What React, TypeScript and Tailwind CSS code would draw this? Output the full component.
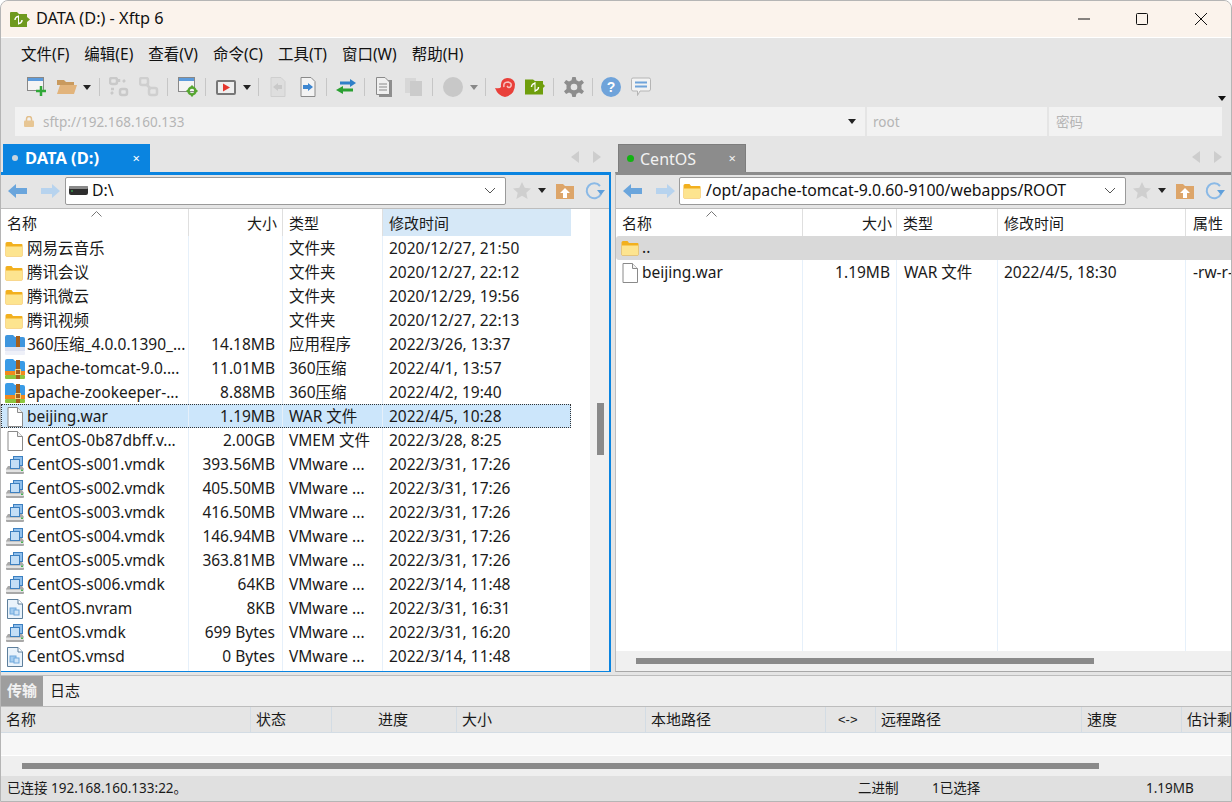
import type { ReactNode } from 'react'

const Folder = ({ className = '' }: { className?: string }) => (
  <svg width="18" height="16" viewBox="0 0 18 16" className={className}>
    <path d="M0.5 2.5Q0.5 1 2 1H6.5L8 3H16.5Q17.5 3 17.5 4V14.5Q17.5 15.5 16.5 15.5H1.5Q0.5 15.5 0.5 14.5Z" fill="#f2b01e" />
    <path d="M1 5.5H17V14.5Q17 15 16.5 15H1.5Q1 15 1 14.5Z" fill="#fde48f" />
  </svg>
)

const FileIcon = () => (
  <svg width="16" height="20" viewBox="0 0 16 20">
    <path d="M1 .5H10.5L15.5 5.5V19.5H1Z" fill="#fff" stroke="#8a8a8a" />
    <path d="M10.5 .5V5.5H15.5" fill="#f2f2f2" stroke="#8a8a8a" />
  </svg>
)

const ZipIcon = ({ faded }: { faded?: boolean }) => (
  <svg width="20" height="20" viewBox="0 0 20 20">
    <path d="M0 2Q0 0 2 0H8L10 2H18Q20 2 20 4V13H0Z" fill={faded ? '#3f96de' : '#3a9be6'} />
    <rect x="0" y="12" width="20" height="4" fill={faded ? '#dfe3f2' : '#f08a1d'} />
    <rect x="0" y="16" width="20" height="4" rx="1" fill={faded ? '#eef0f8' : '#8cc63f'} />
    <rect x="11" y="1" width="4" height={faded ? 11 : 19} fill="#a5601c" />
    {!faded && <rect x="10.500" y="10.500" width="5" height="5" fill="none" stroke="#f6d27c" />}
  </svg>
)

const DiskIcon = () => (
  <svg width="20" height="20" viewBox="0 0 20 20">
    <path d="M1 14L3 11H17L19 14V18Q19 19 18 19H2Q1 19 1 18Z" fill="#a8a8a8" />
    <path d="M1 14.500H19V17H1Z" fill="#e2e2e2" />
    <rect x="16" y="14.500" width="2" height="1.500" fill="#46b450" />
    <rect x="8.500" y="1.500" width="9" height="9" fill="#8fbfec" stroke="#3d80c0" />
    <rect x="5.500" y="4.500" width="9" height="9" fill="#c3def6" stroke="#3d80c0" />
  </svg>
)

const DocIcon = () => (
  <svg width="16" height="20" viewBox="0 0 16 20">
    <path d="M.5 .5H11L15.500 5V19.500H.5Z" fill="#eaf3fb" stroke="#5d7f9c" />
    <path d="M11 .5V5H15.500" fill="#fff" stroke="#5d7f9c" />
    <rect x="3" y="9" width="6" height="6" fill="#a5cdf0" stroke="#6fa8dc" />
    <rect x="7" y="11" width="5" height="5" fill="#cfe4f7" stroke="#6fa8dc" />
  </svg>
)

type Kind = 'folder' | 'file' | 'zip' | 'zipFaded' | 'disk' | 'doc'

const RowIcon = ({ kind }: { kind: Kind }) => {
  if (kind === 'folder') return <Folder />
  if (kind === 'file') return <span className="pl-[2px]"><FileIcon /></span>
  if (kind === 'zip') return <ZipIcon />
  if (kind === 'zipFaded') return <ZipIcon faded />
  if (kind === 'disk') return <DiskIcon />
  return <span className="pl-[2px]"><DocIcon /></span>
}

const leftRows: { kind: Kind; name: string; size: string; type: string; time: string; sel?: boolean }[] = [
  { kind: 'folder', name: '网易云音乐', size: '', type: '文件夹', time: '2020/12/27, 21:50' },
  { kind: 'folder', name: '腾讯会议', size: '', type: '文件夹', time: '2020/12/27, 22:12' },
  { kind: 'folder', name: '腾讯微云', size: '', type: '文件夹', time: '2020/12/29, 19:56' },
  { kind: 'folder', name: '腾讯视频', size: '', type: '文件夹', time: '2020/12/27, 22:13' },
  { kind: 'zipFaded', name: '360压缩_4.0.0.1390_...', size: '14.18MB', type: '应用程序', time: '2022/3/26, 13:37' },
  { kind: 'zip', name: 'apache-tomcat-9.0....', size: '11.01MB', type: '360压缩', time: '2022/4/1, 13:57' },
  { kind: 'zip', name: 'apache-zookeeper-...', size: '8.88MB', type: '360压缩', time: '2022/4/2, 19:40' },
  { kind: 'file', name: 'beijing.war', size: '1.19MB', type: 'WAR 文件', time: '2022/4/5, 10:28', sel: true },
  { kind: 'file', name: 'CentOS-0b87dbff.v...', size: '2.00GB', type: 'VMEM 文件', time: '2022/3/28, 8:25' },
  { kind: 'disk', name: 'CentOS-s001.vmdk', size: '393.56MB', type: 'VMware ...', time: '2022/3/31, 17:26' },
  { kind: 'disk', name: 'CentOS-s002.vmdk', size: '405.50MB', type: 'VMware ...', time: '2022/3/31, 17:26' },
  { kind: 'disk', name: 'CentOS-s003.vmdk', size: '416.50MB', type: 'VMware ...', time: '2022/3/31, 17:26' },
  { kind: 'disk', name: 'CentOS-s004.vmdk', size: '146.94MB', type: 'VMware ...', time: '2022/3/31, 17:26' },
  { kind: 'disk', name: 'CentOS-s005.vmdk', size: '363.81MB', type: 'VMware ...', time: '2022/3/31, 17:26' },
  { kind: 'disk', name: 'CentOS-s006.vmdk', size: '64KB', type: 'VMware ...', time: '2022/3/14, 11:48' },
  { kind: 'doc', name: 'CentOS.nvram', size: '8KB', type: 'VMware ...', time: '2022/3/31, 16:31' },
  { kind: 'disk', name: 'CentOS.vmdk', size: '699 Bytes', type: 'VMware ...', time: '2022/3/31, 16:20' },
  { kind: 'doc', name: 'CentOS.vmsd', size: '0 Bytes', type: 'VMware ...', time: '2022/3/14, 11:48' },
]

const Arrow = ({ right, light }: { right?: boolean; light?: boolean }) => (
  <svg width="20" height="16" viewBox="0 0 20 16" className={right ? 'scale-x-[-1]' : ''}>
    <path d="M0 8L8 1V5H19V11H8V15Z" fill={light ? '#b7d3ee' : '#6aa5dc'} />
  </svg>
)

const Caret = ({ color = '#222' }: { color?: string }) => (
  <svg width="8" height="5" viewBox="0 0 8 5"><path d="M0 0H8L4 5Z" fill={color} /></svg>
)

const Sep = ({ className }: { className: string }) => <div className={`h-[18px] w-px bg-[#c6c6c6] ${className}`} />

const Tool = ({ children, className }: { children: ReactNode; className: string }) => (
  <div className={`flex h-5 w-5 shrink-0 items-center justify-center ${className}`}>{children}</div>
)

const PathBar = ({ icon, path, width, lead }: { icon: ReactNode; path: string; width: string; lead: string }) => (
  <div className="flex h-[34px] shrink-0 items-center border-b border-[#bdbdbd] bg-[#e5e5e5] pb-[2px]">
    <div className={`flex shrink-0 items-center gap-[12px] pl-[7px] ${lead}`}>
      <Arrow />
      <Arrow right light />
    </div>
    <div className={`flex h-[28px] shrink-0 items-center rounded-[2px] border border-[#9a9a9a] bg-white pl-[3px] pr-[9px] ${width}`}>
      <span className="flex w-[23px] shrink-0 justify-start">{icon}</span>
      <span className="flex-1 text-[15.800px] text-[#111]">{path}</span>
      <svg width="12" height="7" viewBox="0 0 12 7"><path d="M1 1L6 6L11 1" fill="none" stroke="#555" /></svg>
    </div>
    <div className="flex items-center pl-[7px]">
      <svg width="18" height="17" viewBox="0 0 18 17"><path d="M9 0L11.700 5.800L18 6.500L13.300 10.700L14.600 17L9 13.800L3.400 17L4.700 10.700L0 6.500L6.300 5.800Z" fill="#cfcfcf" /></svg>
      <span className="ml-[7px] mr-[10px]"><Caret /></span>
      <svg width="18" height="16" viewBox="0 0 18 16">
        <path d="M0 1H7L9 3H18V16H0Z" fill="#dda569" />
        <path d="M9 5L14 10H11V15H7V10H4Z" fill="#fff" />
      </svg>
      <svg width="22" height="20" viewBox="0 0 22 20" className="ml-[10px]">
        <path d="M17 13A7.500 7.500 0 1 1 16 5" fill="none" stroke="#8ab9e6" strokeWidth="2" />
        <path d="M13 9H21L17 14Z" fill="#5f9fdb" />
      </svg>
    </div>
  </div>
)

const HeadCell = ({ children, className = '' }: { children?: ReactNode; className?: string }) => (
  <div className={`flex h-full shrink-0 items-center border-r border-[#dfdfdf] pt-[2px] ${className}`}>{children}</div>
)

const SortMark = () => (
  <svg width="11" height="6" viewBox="0 0 11 6" className="absolute top-[2px] left-[90px]">
    <path d="M.5 5.500L5.500 .5L10.500 5.500" fill="none" stroke="#777" />
  </svg>
)

const Cell = ({ children, className = '' }: { children?: ReactNode; className?: string }) => (
  <div className={`flex h-full shrink-0 items-center overflow-hidden whitespace-nowrap border-r border-[#e6f0fa] pt-[2px] ${className}`}>{children}</div>
)

const TabArrows = () => (
  <div className="flex items-center gap-[12px]">
    <svg width="9" height="12" viewBox="0 0 9 12"><path d="M8 0V12L0 6Z" fill="#cdcdcd" /></svg>
    <svg width="9" height="12" viewBox="0 0 9 12"><path d="M1 0V12L9 6Z" fill="#cdcdcd" /></svg>
  </div>
)

const TransferCol = ({ w, children, right }: { w: string; children: ReactNode; right?: boolean }) => (
  <div className={`flex h-full shrink-0 items-center border-r border-[#d3dce4] px-[5px] ${w} ${right ? 'justify-end' : ''}`}>{children}</div>
)

export default function App() {
  return (
    <div className="flex h-[802px] w-[1232px] flex-col overflow-hidden rounded-t-[8px] border border-[#b5b5b5] bg-[#e5e5e5] text-[15.500px] leading-none text-[#1a1a1a] [font-family:'Noto_Sans','Noto_Sans_CJK_SC',sans-serif]">
      {/* title */}
      <div className="flex h-[37px] shrink-0 items-center border-b border-white bg-[#fbf3ec] pl-[9px]">
        <svg width="20" height="15" viewBox="0 0 20 15">
          <path d="M0 1Q0 0 1 0H7L9 2H17V5L20 7.500L17 10V15H1Q0 15 0 14Z" fill="#6f9a1e" />
          <path d="M5 8A3.500 3.500 0 0 1 8.500 4.500M12 8A3.500 3.500 0 0 1 8.500 11.500" fill="none" stroke="#fff" strokeWidth="1.500" />
          <path d="M8.500 3.500V12.500" stroke="#fff" />
        </svg>
        <span className="ml-[6px] flex-1 pb-[2px] text-[16.300px] text-[#111]">DATA (D:) - Xftp 6</span>
        <div className="flex items-center pr-[24px]">
          <svg width="12" height="12" viewBox="0 0 12 12" className="mr-[46px]"><path d="M0 6H12" stroke="#111" /></svg>
          <svg width="12" height="12" viewBox="0 0 12 12" className="mr-[47px]"><rect x=".5" y=".5" width="11" height="11" rx="1" fill="none" stroke="#111" /></svg>
          <svg width="12" height="12" viewBox="0 0 12 12"><path d="M0 0L12 12M12 0L0 12" stroke="#111" /></svg>
        </div>
      </div>

      {/* menu */}
      <div className="flex h-[32px] shrink-0 items-center gap-[15px] pl-[20px] pt-[1px] text-[15.500px] text-[#111]">
        {['文件(F)', '编辑(E)', '查看(V)', '命令(C)', '工具(T)', '窗口(W)', '帮助(H)'].map(m => <span key={m}>{m}</span>)}
      </div>

      {/* toolbar */}
      <div className="flex h-[37px] shrink-0 items-center pb-[3px] pl-[26px]">
        <Tool className="">
          <svg width="20" height="20" viewBox="0 0 20 20"><rect x=".5" y=".5" width="16" height="13" fill="#f4f4f4" stroke="#888" /><rect x="1" y="1" width="15" height="3" fill="#5c9bdc" /><path d="M14 9V19M9 14H19" stroke="#31a838" strokeWidth="2.500" /></svg>
        </Tool>
        <Tool className="ml-[10px]"><svg width="20" height="16" viewBox="0 0 20 16"><path d="M0 1H7L9 3H17V6H0Z" fill="#c99a5e" /><path d="M3 6H20L17 15H0Z" fill="#e2b47c" /></svg></Tool>
        <span className="ml-[6px]"><Caret /></span>
        <Sep className="ml-[8px]" />
        <Tool className="ml-[9px]">
          <svg width="20" height="20" viewBox="0 0 20 20" fill="none" stroke="#c9c9c9" strokeWidth="2.500"><rect x="1" y="1" width="7" height="6" rx="2" /><rect x="11" y="12" width="7" height="6" rx="2" /><path d="M10 2V5M14 5L16 3M2 12H5M4 15L2 17" /></svg>
        </Tool>
        <Tool className="ml-[10px]">
          <svg width="20" height="20" viewBox="0 0 20 20" fill="none" stroke="#cfcfcf" strokeWidth="2.500"><rect x="1" y="1" width="8" height="7" rx="2" /><rect x="10" y="11" width="8" height="7" rx="2" /><path d="M7 7L12 12" /></svg>
        </Tool>
        <Sep className="ml-[8px]" />
        <Tool className="ml-[10px]">
          <svg width="20" height="20" viewBox="0 0 20 20"><rect x=".5" y=".5" width="16" height="14" fill="#f4f4f4" stroke="#888" /><rect x="1" y="1" width="15" height="3" fill="#5c9bdc" /><circle cx="14" cy="14" r="3.500" fill="none" stroke="#55a630" strokeWidth="2.500" /><path d="M14 8.500V10M14 18V19.500M8.500 14H10M18 14H19.500" stroke="#55a630" strokeWidth="2" /></svg>
        </Tool>
        <Sep className="ml-[7px]" />
        <Tool className="ml-[10px]"><svg width="20" height="15" viewBox="0 0 20 15"><rect x="1" y="1" width="18" height="13" rx="1" fill="#efefef" stroke="#777" strokeWidth="2" /><path d="M7 3.500L14 7.500L7 11.500Z" fill="#e5362d" /></svg></Tool>
        <span className="ml-[7px]"><Caret /></span>
        <Sep className="ml-[7px]" />
        <Tool className="ml-[9px]">
          <svg width="16" height="20" viewBox="0 0 16 20"><path d="M1 .5H11L15 4.500V19.500H1Z" fill="#dedede" stroke="#cfcfcf" /><path d="M3 10L8 6V8H12V12H8V14Z" fill="#c9c9c9" /></svg>
        </Tool>
        <Tool className="ml-[10px]">
          <svg width="16" height="20" viewBox="0 0 16 20"><path d="M1 .5H11L15 4.500V19.500H1Z" fill="#f3f3f3" stroke="#8a8a8a" /><path d="M13 10L8 6V8H3V12H8V14Z" fill="#3d86d0" /></svg>
        </Tool>
        <Sep className="ml-[8px]" />
        <Tool className="ml-[9px]">
          <svg width="20" height="16" viewBox="0 0 20 16"><path d="M20 4L14 0V2.500H4V5.500H14V8Z" fill="#2f80c8" /><path d="M0 11L7 7V9.500H17V12.500H7V15Z" fill="#2ba032" /></svg>
        </Tool>
        <Sep className="ml-[8px]" />
        <Tool className="ml-[9px]">
          <svg width="16" height="20" viewBox="0 0 16 20"><rect x="3" y="3" width="13" height="17" fill="#8e8e8e" /><path d="M.5 .5H9L13.500 5V17.500H.5Z" fill="#f0f0f0" stroke="#8a8a8a" /><path d="M3 7H11M3 10H11M3 13H11" stroke="#8a8a8a" /></svg>
        </Tool>
        <Tool className="ml-[9px]">
          <svg width="18" height="20" viewBox="0 0 18 20"><rect x="1" y="1" width="11" height="15" fill="#d7d7d7" /><rect x="6" y="4" width="12" height="15" fill="#cbcbcb" /></svg>
        </Tool>
        <Sep className="ml-[9px]" />
        <Tool className="ml-[10px]"><svg width="20" height="20" viewBox="0 0 20 20"><circle cx="10" cy="10" r="10" fill="#c8c8c8" /></svg></Tool>
        <span className="ml-[7px]"><Caret color="#888" /></span>
        <Sep className="ml-[7px]" />
        <Tool className="ml-[9px]">
          <svg width="20" height="20" viewBox="0 0 20 20">
            <path d="M0 11Q5 12 6 10Q5 2 12 1Q19 1 20 7Q20 18 10 20Q3 19 0 11Z" fill="#e9403a" />
            <path d="M9 10Q8 5 13 5Q17 6 16 9Q14 12 12 9" fill="none" stroke="#f6c3bf" strokeWidth="1.500" />
          </svg>
        </Tool>
        <Tool className="ml-[10px]"><svg width="20" height="16" viewBox="0 0 20 16"><path d="M0 .5H8L10 2H18V5L20 7L18 9V15.500H0Z" fill="#6f9e0c" /><path d="M6.500 8A3.500 3.500 0 0 1 10 4.500M13.500 8A3.500 3.500 0 0 1 10 11.500" fill="none" stroke="#fff" strokeWidth="1.500" /><path d="M10 3V13" stroke="#fff" /></svg></Tool>
        <Sep className="ml-[8px]" />
        <Tool className="ml-[10px]"><svg width="20" height="20" viewBox="0 0 24 24"><path d="M10 0H14L15 4L18 5.500L21.500 3.500L24 7L21 9.500V14.500L24 17L21.500 20.500L18 18.500L15 20L14 24H10L9 20L6 18.500L2.500 20.500L0 17L3 14.500V9.500L0 7L2.500 3.500L6 5.500L9 4Z" fill="#8d8d8d" /><circle cx="12" cy="12" r="4" fill="#e5e5e5" /></svg></Tool>
        <Sep className="ml-[8px]" />
        <Tool className="ml-[8px]"><svg width="20" height="20" viewBox="0 0 20 20"><circle cx="10" cy="10" r="10" fill="#6fa3da" /><text x="10" y="15" textAnchor="middle" fontSize="14" fontWeight="700" fill="#fff" fontFamily="Liberation Sans">?</text></svg></Tool>
        <Tool className="ml-[10px]"><svg width="20" height="20" viewBox="0 0 20 20"><path d="M2 1H18Q19.500 1 19.500 2.500V12Q19.500 14 18 14H9L6.500 18.500V14H2Q.5 14 .5 12V2.500Q.5 1 2 1Z" fill="#f3f3f3" stroke="#b5b5b5" /><path d="M4 5.500H16M4 9.500H16" stroke="#6fa3da" strokeWidth="2" /></svg></Tool>
        <div className="flex flex-1 items-end justify-end self-stretch pb-[3px] pr-[5px]"><Caret color="#111" /></div>
      </div>

      {/* address */}
      <div className="ml-[14px] mr-[9px] flex h-[29px] shrink-0 items-center bg-[#f2f2f2] text-[13.500px] text-[#b5b5b5]">
        <div className="flex h-full w-[850px] shrink-0 items-center pl-[9px] pr-[9px]">
          <svg width="10" height="11" viewBox="0 0 10 11"><path d="M2.500 5V3A2.500 2.500 0 0 1 7.500 3V5" fill="none" stroke="#e2bf8c" strokeWidth="1.500" /><rect x="0" y="4.500" width="10" height="6.500" rx="1" fill="#e7c694" /></svg>
          <span className="ml-[9px] flex-1 pt-[2px]">sftp://192.168.160.133</span>
          <Caret />
        </div>
        <div className="flex h-full w-[184px] shrink-0 items-center border-x-2 border-[#e5e5e5] pl-[6px] pt-[2px]">root</div>
        <div className="flex h-full flex-1 items-center pl-[7px] pt-[2px]">密码</div>
      </div>

      {/* panels */}
      <div className="flex min-h-0 flex-1">
        {/* left */}
        <div className="flex w-[610px] shrink-0 flex-col">
          <div className="flex h-[36px] shrink-0 items-end justify-between pl-[2px] pr-[10px]">
            <div className="flex h-[28px] w-[147px] items-center bg-[#0a84e0] pl-[9px] pr-[10px] text-white">
              <span className="size-[6px] rounded-full bg-[#c7d4de]" />
              <span className="ml-[7px] flex-1 text-[16.500px] font-bold">DATA (D:)</span>
              <span className="text-[13px]">×</span>
            </div>
            <div className="self-center pt-[6px]"><TabArrows /></div>
          </div>
          <div className="flex min-h-0 flex-1 flex-col overflow-hidden border-t-[3px] border-r-2 border-b border-[#0a84e0]">
            <PathBar
              width="w-[441px]"
              lead="w-[64px]"
              path="D:\"
              icon={<svg width="19" height="9" viewBox="0 0 19 9"><rect width="19" height="9" rx="2" fill="#2d2d2d" /><rect width="19" height="3" rx="1" fill="#8a8a8a" /><rect x="2" y="4.500" width="2" height="1" fill="#3ecb5b" /></svg>}
            />
            <div className="flex min-h-0 flex-1">
              <div className="flex w-[570px] shrink-0 flex-col bg-white">
                <div className="relative flex h-[27px] shrink-0 text-[15px]">
                  <SortMark />
                  <HeadCell className="w-[188px] pl-[6px]">名称</HeadCell>
                  <HeadCell className="w-[94px] justify-end pr-[5px]">大小</HeadCell>
                  <HeadCell className="w-[100px] pl-[6px]">类型</HeadCell>
                  <div className="flex h-full flex-1 items-center bg-[#d6e8f7] px-[6px] pt-[2px]">修改时间</div>
                </div>
                {leftRows.map(r => (
                  <div key={r.name} className={`flex h-[24px] shrink-0 items-center ${r.sel ? 'bg-[#cce6fb] outline-1 -outline-offset-1 outline-dotted outline-[#333]' : ''}`}>
                    <Cell className="w-[188px] pl-[4px]">
                      <span className="flex w-[22px] shrink-0 items-center"><RowIcon kind={r.kind} /></span>
                      <span>{r.name}</span>
                    </Cell>
                    <Cell className="w-[94px] justify-end pr-[7px]">{r.size}</Cell>
                    <Cell className="w-[100px] pl-[6px]">{r.type}</Cell>
                    <Cell className="flex-1 border-r-0 pl-[6px]">{r.time}</Cell>
                  </div>
                ))}
                <div className="flex flex-1">
                  <div className="w-[188px] border-r border-[#e6f0fa]" />
                  <div className="w-[94px] border-r border-[#e6f0fa]" />
                  <div className="w-[100px] border-r border-[#e6f0fa]" />
                </div>
              </div>
              <div className="w-[19px] bg-white" />
              <div className="flex-1 bg-[#f0f0f0] pt-[194px] pl-[7px]">
                <div className="h-[52px] w-[7px] bg-[#8a8a8a]" />
              </div>
            </div>
          </div>
        </div>

        {/* right */}
        <div className="ml-[4px] flex min-w-0 flex-1 flex-col">
          <div className="flex h-[36px] shrink-0 items-end justify-between pl-[3px] pr-[9px]">
            <div className="flex h-[28px] w-[128px] items-center border-x border-t border-[#7d7d7d] bg-[#8c8c8c] pl-[8px] pr-[9px] text-[#f2f2f2]">
              <span className="size-[7px] rounded-full bg-[#11b311]" />
              <span className="ml-[6px] flex-1 text-[16px]">CentOS</span>
              <span className="text-[13px]">×</span>
            </div>
            <div className="self-center pt-[6px]"><TabArrows /></div>
          </div>
          <div className="flex min-h-0 flex-1 flex-col border-t-[3px] border-l border-b border-[#8c8c8c] border-l-[#bdbdbd] border-b-[#a8a8a8]">
            <PathBar width="w-[447px]" lead="w-[63px]" path="/opt/apache-tomcat-9.0.60-9100/webapps/ROOT" icon={<Folder />} />
            <div className="flex min-h-0 flex-1 flex-col bg-white">
              <div className="relative flex h-[27px] shrink-0 text-[15px]">
                <SortMark />
                <HeadCell className="w-[187px] pl-[6px]">名称</HeadCell>
                <HeadCell className="w-[94px] justify-end pr-[4px]">大小</HeadCell>
                <HeadCell className="w-[101px] pl-[6px]">类型</HeadCell>
                <HeadCell className="w-[188px] pl-[6px]">修改时间</HeadCell>
                <div className="flex h-full flex-1 items-center px-[7px] pt-[2px]">属性</div>
              </div>
              <div className="flex h-[24px] shrink-0 items-center rounded-l-[3px] bg-[#d9d9d9] pl-[5px]">
                <span className="flex w-[21px]"><Folder /></span>
                <span>..</span>
              </div>
              <div className="flex h-[24px] shrink-0 items-center">
                <Cell className="w-[187px] pl-[4px]">
                  <span className="flex w-[22px] shrink-0 items-center"><RowIcon kind="file" /></span>
                  <span>beijing.war</span>
                </Cell>
                <Cell className="w-[94px] justify-end pr-[6px]">1.19MB</Cell>
                <Cell className="w-[101px] pl-[7px]">WAR 文件</Cell>
                <Cell className="w-[188px] pl-[6px]">2022/4/5, 18:30</Cell>
                <div className="overflow-hidden whitespace-nowrap pl-[7px] pt-[2px]">-rw-r--r--</div>
              </div>
              <div className="flex flex-1">
                <div className="w-[187px] border-r border-[#e6f0fa]" />
                <div className="w-[94px] border-r border-[#e6f0fa]" />
                <div className="w-[101px] border-r border-[#e6f0fa]" />
                <div className="w-[188px] border-r border-[#e6f0fa]" />
              </div>
              <div className="flex h-[20px] shrink-0 items-center bg-[#f0f0f0] pl-[20px]">
                <div className="h-[6px] w-[458px] bg-[#8a8a8a]" />
              </div>
            </div>
          </div>
        </div>
      </div>

      {/* transfers */}
      <div className="mt-[3px] flex h-[32px] shrink-0 border-y border-[#bdbdbd] bg-[#efefef] text-[15px]">
        <div className="flex w-[42px] items-center justify-center bg-[#9e9e9e] pb-[2px] font-bold text-[#f2f2f2]">传输</div>
        <div className="flex w-[44px] items-center justify-center pb-[2px]">日志</div>
      </div>
      <div className="flex h-[26px] shrink-0 border-b border-[#d3dce4] bg-[#e5e5e5] text-[15px]">
        <TransferCol w="w-[250px]">名称</TransferCol>
        <TransferCol w="w-[81px]">状态</TransferCol>
        <TransferCol w="w-[125px]" right><span className="mr-[43px]">进度</span></TransferCol>
        <TransferCol w="w-[189px]">大小</TransferCol>
        <TransferCol w="w-[180px]">本地路径</TransferCol>
        <TransferCol w="w-[50px]"><span className="pl-[7px] text-[13px] [font-family:'Liberation_Sans',sans-serif]">&lt;-&gt;</span></TransferCol>
        <TransferCol w="w-[206px]">远程路径</TransferCol>
        <TransferCol w="w-[100px]">速度</TransferCol>
        <div className="flex h-full flex-1 items-center overflow-hidden whitespace-nowrap px-[5px]">估计剩余</div>
      </div>
      <div className="h-[23px] shrink-0 border-b border-white bg-[#f7f7f7]" />
      <div className="flex h-[20px] shrink-0 items-center bg-[#efefef] pl-[21px]">
        <div className="h-[6px] w-[1077px] bg-[#8a8a8a]" />
      </div>
      <div className="flex h-[25px] shrink-0 items-center bg-[#e0e0e0] text-[13.500px]">
        <span className="w-[857px] pl-[6px]">已连接 192.168.160.133:22。</span>
        <span className="w-[74px]">二进制</span>
        <span className="w-[214px]">1已选择</span>
        <span>1.19MB</span>
      </div>
    </div>
  )
}
